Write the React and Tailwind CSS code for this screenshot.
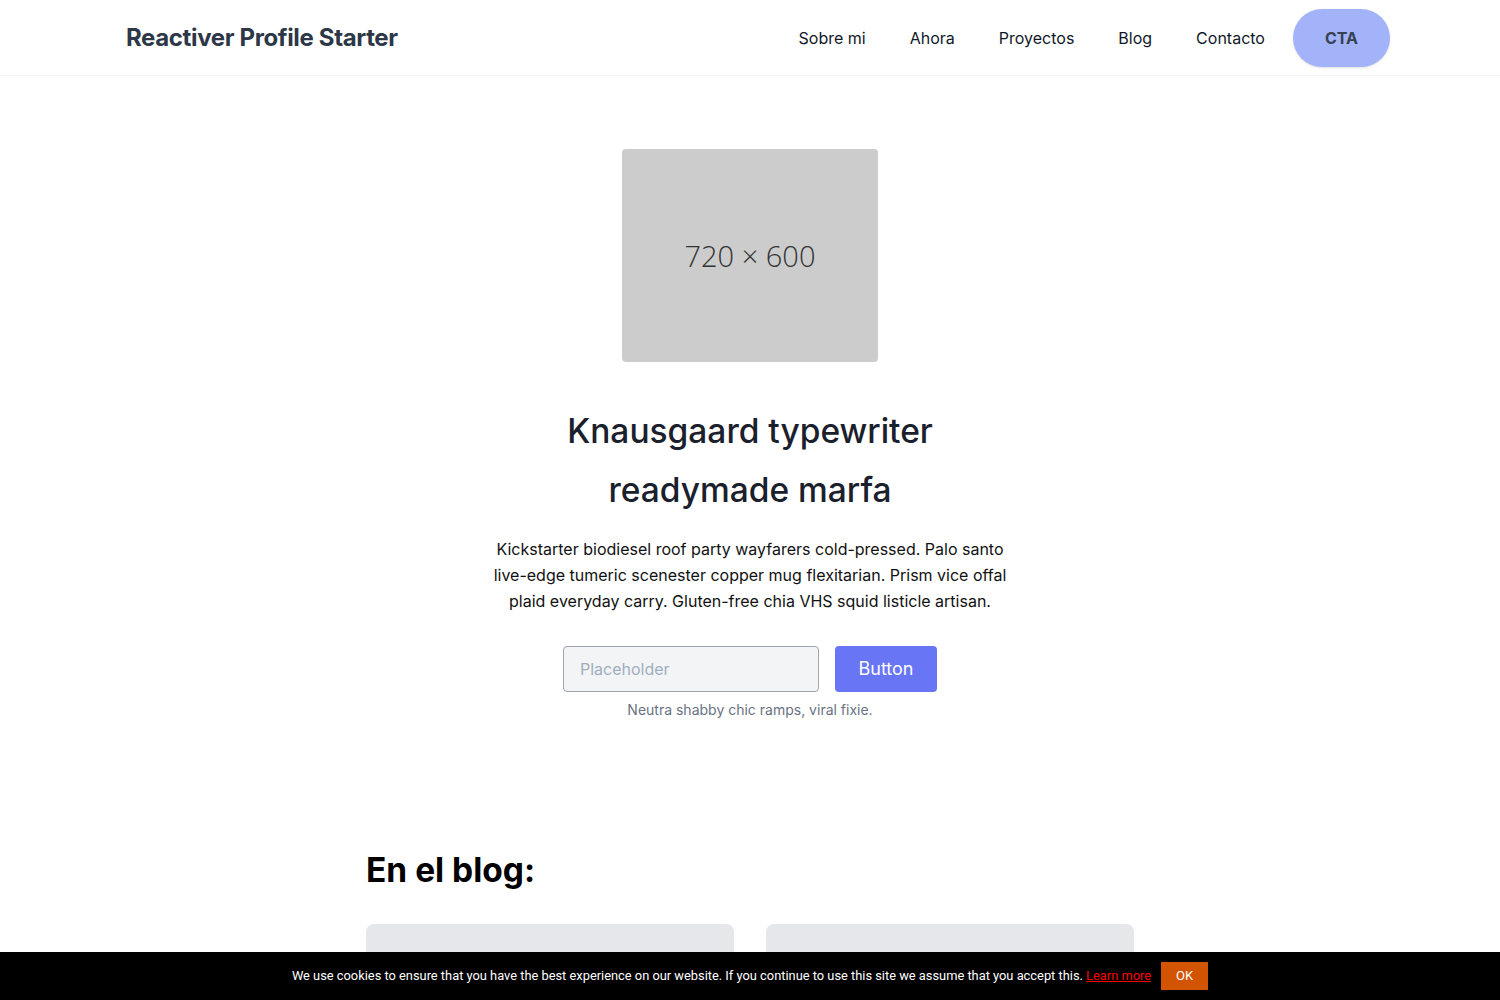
export default function App() {
  const nav = ["Sobre mi", "Ahora", "Proyectos", "Blog", "Contacto"];

  return (
    <div className="min-h-screen bg-white font-['Inter',sans-serif] text-gray-900">
      <header className="border-b border-gray-100">
        <div className="mx-auto flex h-[75px] max-w-[1280px] items-center justify-between">
          <a className="pl-4 text-2xl font-bold tracking-[-0.015em] text-[#2d3748]">Reactiver Profile Starter</a>
          <nav className="flex items-center">
            {nav.map((item) => (
              <a key={item} className="mr-11 text-base text-gray-900">
                {item}
              </a>
            ))}
            <button className="ml-[-16px] flex h-[58px] items-center rounded-full bg-[#a3b3fa] px-8 text-base font-bold text-[#374151] shadow-sm">
              CTA
            </button>
          </nav>
        </div>
      </header>

      <section className="flex flex-col items-center pt-[73px] pb-[125px]">
        <div className="flex h-[213px] w-64 items-center justify-center rounded bg-[#cccccc]">
          <span className="font-['Open_Sans',sans-serif] text-[29px] font-light text-[#333333]">720 × 600</span>
        </div>
        <div className="mt-10 flex w-[520px] flex-col items-center text-center">
          <h1 className="text-[33.5px] leading-[59px] font-medium text-[#1a202c]">
            Knausgaard typewriter
            <br />
            readymade marfa
          </h1>
          <p className="mt-4 text-base leading-[26px] text-[#111]">
            Kickstarter biodiesel roof party wayfarers cold-pressed. Palo santo live-edge tumeric scenester copper mug
            flexitarian. Prism vice offal plaid everyday carry. Gluten-free chia VHS squid listicle artisan.
          </p>
          <div className="mt-8 flex gap-4">
            <input
              placeholder="Placeholder"
              className="h-[46px] w-64 rounded border border-[#a0a4b0] bg-[#f3f4f6] px-4 text-base text-gray-700 outline-none placeholder:text-[#a0aec0]"
            />
            <button className="h-[46px] w-[102px] rounded bg-[#6875f5] text-lg text-white">Button</button>
          </div>
          <p className="mt-2 text-sm leading-5 text-gray-500">Neutra shabby chic ramps, viral fixie.</p>
        </div>
      </section>

      <section className="mx-auto max-w-[768px] pb-20">
        <h2 className="text-[33.5px] font-bold text-black">En el blog:</h2>
        <div className="mt-[29px] grid grid-cols-2 gap-8">
          <div className="h-64 rounded-lg bg-[#e5e7eb]" />
          <div className="h-64 rounded-lg bg-[#e5e7eb]" />
        </div>
      </section>

      <div className="fixed inset-x-0 bottom-0 flex h-12 items-center justify-center gap-[10px] bg-black font-['Roboto',sans-serif] text-[12.85px] text-white">
        <span>
          We use cookies to ensure that you have the best experience on our website. If you continue to use this site we
          assume that you accept this.{" "}
          <a className="text-[#ff0000] underline">Learn more</a>
        </span>
        <button className="h-7 w-[47px] bg-[#d35400] text-[13px] text-white">OK</button>
      </div>
    </div>
  );
}
